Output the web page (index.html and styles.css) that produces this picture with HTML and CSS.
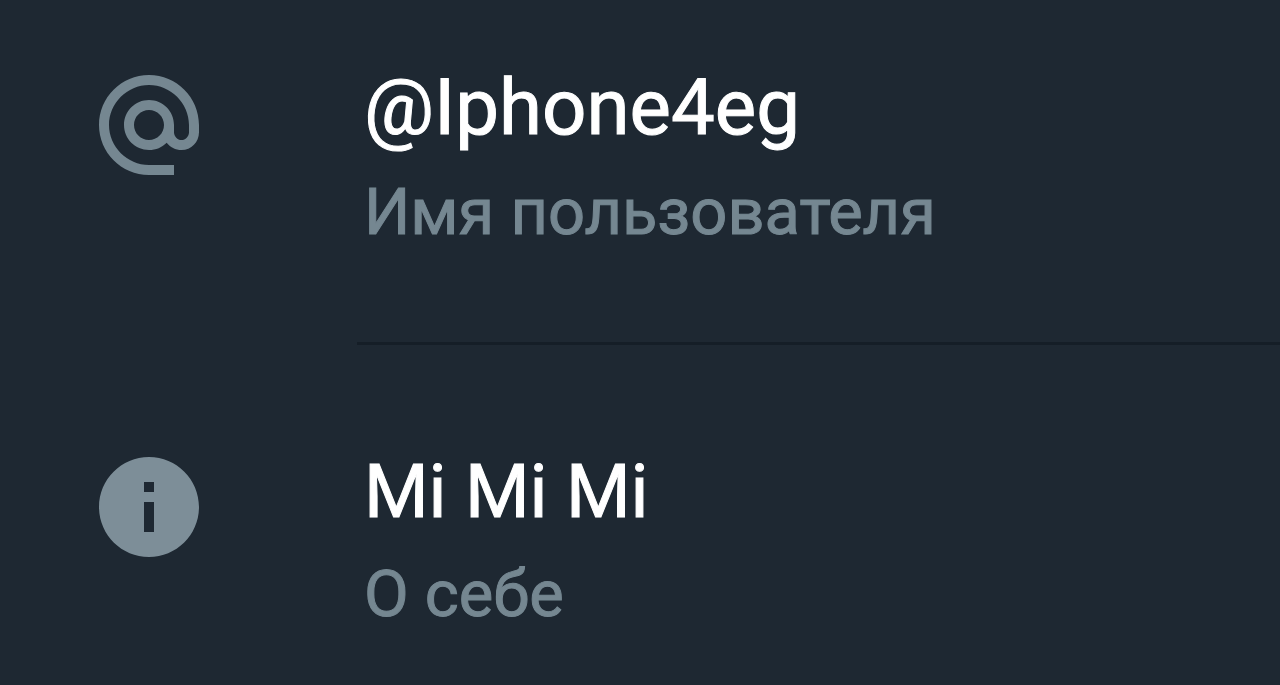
FILE: index.html
```html
<!DOCTYPE html>
<html lang="ru">
<head>
<meta charset="utf-8">
<meta name="viewport" content="width=device-width, initial-scale=1">
<title>Профиль</title>
<link rel="stylesheet" href="styles.css">
</head>
<body>
<main class="profile">
  <section class="row username">
    <svg class="icon" viewBox="2 2 20 20" aria-hidden="true"><path d="M12 2C6.480 2 2 6.480 2 12s4.480 10 10 10h5v-2h-5c-4.340 0-8-3.660-8-8s3.660-8 8-8 8 3.660 8 8v1.430c0 .79-.71 1.570-1.500 1.570s-1.500-.78-1.500-1.570V12c0-2.760-2.240-5-5-5s-5 2.240-5 5 2.240 5 5 5c1.380 0 2.640-.56 3.540-1.470.65.89 1.770 1.470 2.960 1.470 1.970 0 3.500-1.600 3.500-3.570V12c0-5.520-4.480-10-10-10zm0 13c-1.660 0-3-1.340-3-3s1.340-3 3-3 3 1.340 3 3-1.340 3-3 3z"/></svg>
    <div class="info">
      <p class="value">@Iphone4eg</p>
      <p class="label">Имя пользователя</p>
    </div>
  </section>
  <section class="row about">
    <svg class="icon" viewBox="2 2 20 20" aria-hidden="true"><path d="M12 2C6.480 2 2 6.480 2 12s4.480 10 10 10 10-4.480 10-10S17.520 2 12 2zm1 15h-2v-6h2v6zm0-8h-2V7h2v2z"/></svg>
    <div class="info">
      <p class="value">Mi Mi Mi</p>
      <p class="label">О себе</p>
    </div>
  </section>
</main>
</body>
</html>
```
FILE: styles.css
```css
body {
  margin: 0;
  background: #1e2832;
  font-family: Roboto, "Noto Sans", sans-serif;
}

.row {
  display: flex;
  align-items: flex-start;
  gap: 158px;
  padding-left: 99px;
}

.icon {
  flex: none;
  width: 100px;
  height: 100px;
  fill: #7d8e98;
}

.username .icon {
  margin-top: 75px;
  fill: #758791;
}

.about .icon {
  margin-top: 115px;
}

.info {
  flex: 1;
  padding: 64px 7px 90px;
}

.about .info {
  padding-top: 103px;
  padding-bottom: 48px;
  border-top: 3px solid #151e27;
}

.value,
.label {
  margin: 0;
}

.value {
  color: #fff;
  font-size: 78px;
  line-height: 88px;
  -webkit-text-stroke: 1px #fff;
}

.label {
  margin-top: 20px;
  color: #758791;
  font-size: 65px;
  line-height: 80px;
  -webkit-text-stroke: 1px #758791;
}

.about .value {
  font-size: 74px;
}

.about .label {
  margin-top: 18px;
}
```
